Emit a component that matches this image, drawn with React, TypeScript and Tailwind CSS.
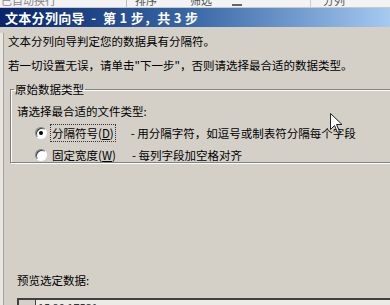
const cjk = { fontFamily: '"Noto Sans CJK SC", "Noto Sans", sans-serif' };

const Radio = ({ checked }: { checked?: boolean }) => (
  <span className="relative flex h-[12px] w-[12px] items-center justify-center rounded-full border border-t-[#808080] border-l-[#808080] border-b-white border-r-white bg-white shadow-[inset_1px_1px_0_#404040]">
    {checked && <span className="h-[4px] w-[4px] rounded-full bg-black" />}
  </span>
);

const Cursor = () => (
  <svg className="absolute left-[330px] top-[113px]" width="13" height="21" viewBox="0 0 13 21">
    <path d="M0.5 0.5 L0.5 16.5 L4.5 12.5 L7.5 19.5 L9.5 18.5 L6.5 11.5 L12 11.5 Z" fill="#fff" stroke="#222" strokeWidth="1" />
  </svg>
);

// only the bottom sliver of the ribbon labels is visible
const Sliver = ({ children, className }: { children: React.ReactNode; className?: string }) => (
  <span className={`block h-[7px] overflow-hidden ${className ?? ""}`}>
    <span className="mt-[-6px] block text-[11px] leading-[12px]">{children}</span>
  </span>
);

export default function App() {
  return (
    <div className="relative h-[305px] w-[390px] overflow-hidden bg-[#d4d0c8] text-black" style={cjk}>
      {/* toolbar remnant */}
      <div className="flex h-[8px] items-start overflow-hidden border-b border-b-[#c8c8c8] bg-[#f3f3f3] text-[#555]">
        <Sliver className="ml-[1px] text-[#888]">已自动换行</Sliver>
        <span className="ml-[70px] h-[7px] w-px bg-[#bbb]" />
        <Sliver className="ml-[8px]">排序</Sliver>
        <Sliver className="ml-[33px]">筛选</Sliver>
        <span className="ml-[20px] mt-[4px] h-[2px] w-[10px] bg-[#666]" />
        <span className="ml-[68px] h-[7px] w-px bg-[#ccc]" />
        <Sliver className="ml-[12px]">分列</Sliver>
      </div>
      {/* title bar */}
      <div className="flex h-[19px] items-center whitespace-pre bg-gradient-to-r from-[#0a246a] via-[#3a6aa8] to-[#a6caf0] pl-[5px] text-[13px] font-bold leading-[19px] tracking-[0.3px] text-white">
        {"文本分列向导  -  第 1 步，共 3 步"}
      </div>
      {/* body */}
      <div className="relative h-[278px] border-l-[3px] border-l-[#e8e6e0]">
        <div className="absolute left-0 top-0 h-full w-px bg-[#a8a49c]" />
        <p className="ml-[5px] mt-[6px] text-[11.5px] leading-[16px]">文本分列向导判定您的数据具有分隔符。</p>
        <p className="ml-[5px] mt-[8px] text-[11.5px] leading-[16px]">
          若一切设置无误，请单击"下一步"，否则请选择最合适的数据类型。
        </p>
        <fieldset className="ml-[7px] mt-[8px] h-[82px] w-[400px] border border-[#808080] shadow-[inset_1px_1px_0_#fff,1px_1px_0_#fff]">
          <legend className="ml-[3px] px-[1px] text-[11.5px] leading-[16px]">原始数据类型</legend>
          <p className="ml-[6px] mt-[6px] text-[11.5px] leading-[16px]">请选择最合适的文件类型:</p>
          <div className="mt-[5px] flex h-[18px] items-center text-[11.5px]">
            <span className="ml-[24px]">
              <Radio checked />
            </span>
            <span className="ml-[3px] border border-dotted border-[#333] px-[1px] leading-[16px]">
              分隔符号(<span className="underline">D</span>)
            </span>
            <span className="ml-[15px] leading-[16px]">- 用分隔字符，如逗号或制表符分隔每个字段</span>
          </div>
          <div className="mt-[4px] flex h-[18px] items-center text-[11.5px]">
            <span className="ml-[24px]">
              <Radio />
            </span>
            <span className="ml-[4px] px-[1px] leading-[16px]">
              固定宽度(<span className="underline">W</span>)
            </span>
            <span className="ml-[15px] leading-[16px]">- 每列字段加空格对齐</span>
          </div>
        </fieldset>
        <p className="ml-[14px] mt-[109px] text-[11.5px] leading-[16px]">预览选定数据:</p>
        <div className="ml-[14px] mt-[10px] flex h-[20px] border-t-2 border-l-2 border-t-[#404040] border-l-[#404040] bg-[#ecebe6]">
          <div className="w-[17px] border-r border-r-[#404040] bg-[#d4d0c8]" />
          <div className="pl-[2px] text-[11px] leading-[14px] text-[#333]">15 20 17531</div>
        </div>
      </div>
      <Cursor />
    </div>
  );
}
